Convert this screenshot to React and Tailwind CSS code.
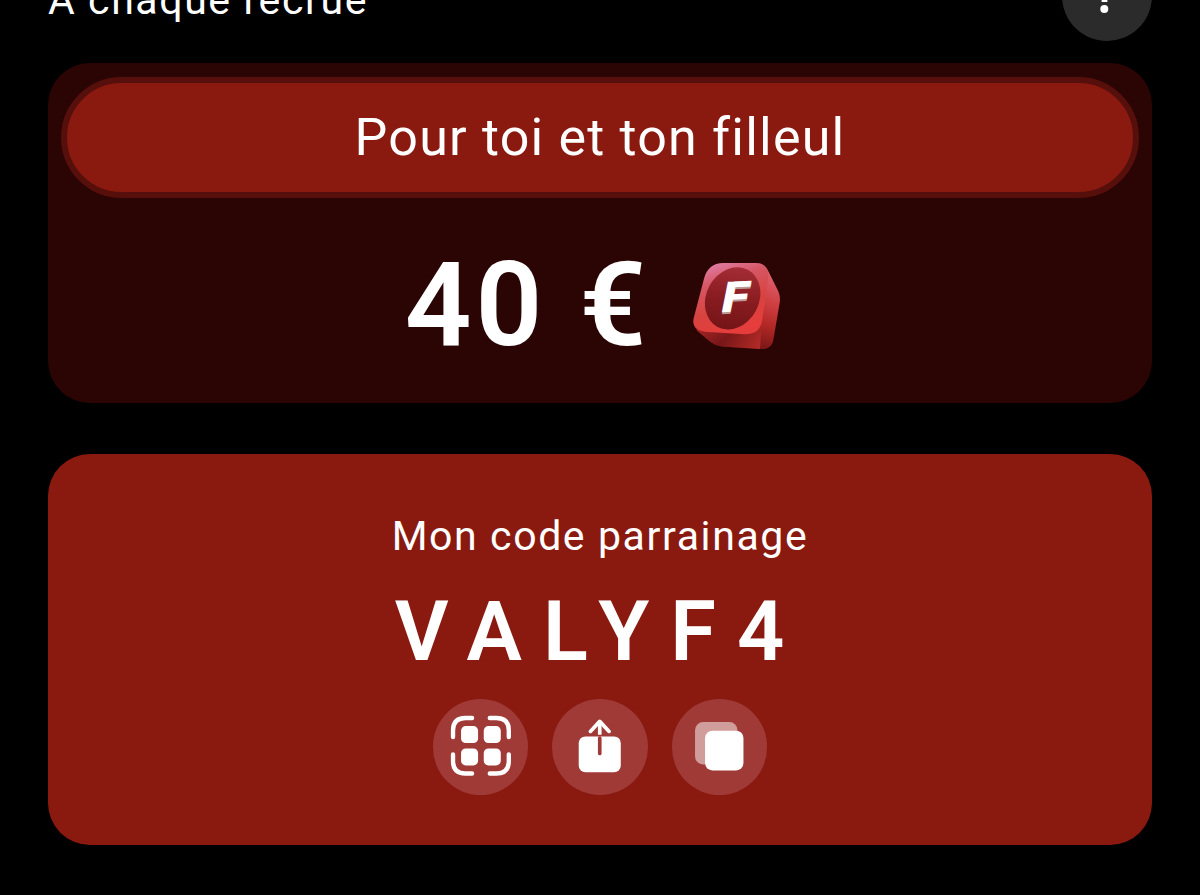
function MoreButton() {
  return (
    <button className="relative h-[90px] w-[90px] shrink-0 rounded-full bg-[#2b2b2b]">
      <svg viewBox="0 0 90 90" className="h-full w-full" fill="#fff">
        <circle cx="42.5" cy="35" r="4" />
        <rect x="39.6" y="42" width="5.8" height="9" />
        <circle cx="42.3" cy="58" r="4" />
      </svg>
    </button>
  );
}

function TokenIcon() {
  return (
    <svg viewBox="0 0 345 330" className="h-[110px] w-[115px]">
      <defs>
        <linearGradient id="side" x1="0.85" y1="0.1" x2="0.55" y2="1">
          <stop offset="0" stopColor="#e0616f" />
          <stop offset="0.35" stopColor="#cf3f42" />
          <stop offset="0.62" stopColor="#b32826" />
          <stop offset="1" stopColor="#6a1213" />
        </linearGradient>
        <linearGradient id="bottom" x1="0" y1="0.3" x2="1" y2="0.7">
          <stop offset="0" stopColor="#b52a2c" />
          <stop offset="0.5" stopColor="#7c1819" />
          <stop offset="1" stopColor="#c02f2b" />
        </linearGradient>
        <linearGradient id="face" x1="0.15" y1="0" x2="0.5" y2="1">
          <stop offset="0" stopColor="#e283b0" />
          <stop offset="0.3" stopColor="#d65664" />
          <stop offset="0.65" stopColor="#d8433f" />
          <stop offset="1" stopColor="#e63d3c" />
        </linearGradient>
        <linearGradient id="disc" x1="0.3" y1="0" x2="0.6" y2="1">
          <stop offset="0" stopColor="#a62e38" />
          <stop offset="0.5" stopColor="#8a1d21" />
          <stop offset="1" stopColor="#741417" />
        </linearGradient>
      </defs>
      <path d="M225 40C246 40 257 48 265 64L293 120C299 132 301 143 299 158L280 270C276 290 264 298 242 297L135 290C112 288 102 284 88 273L50 241Z" fill="url(#side)" />
      <path d="M43 228L90 246L190 252C220 252 238 240 245 222L240 297L135 290C112 288 102 284 88 273L52 243Z" fill="url(#bottom)" opacity="0.75" />
      <path d="M130 39H226C255 39 268 57 265 84L246 214C241 241 224 253 194 253L85 246C53 244 35 231 41 205L72 86C81 55 99 39 130 39Z" fill="url(#face)" />
      <ellipse cx="158" cy="145" rx="79" ry="97" transform="rotate(28 158 145)" fill="url(#disc)" />
      <g fontFamily="Roboto, sans-serif" fontWeight="900" fontSize="128" stroke="none">
        <text transform="matrix(1.16 -0.05 -0.2 1 118 193)" fill="#b99a98">F</text>
        <text transform="matrix(1.16 -0.05 -0.2 1 118 187)" fill="#fff">F</text>
      </g>
    </svg>
  );
}

function QrIcon() {
  return (
    <svg viewBox="24 27 286 286" className="h-full w-full">
      <g fill="#fff">
        <rect x="108" y="108" width="51" height="51" rx="14" />
        <rect x="176" y="108" width="51" height="51" rx="14" />
        <rect x="108" y="175" width="51" height="51" rx="14" />
        <rect x="176" y="175" width="51" height="51" rx="14" />
      </g>
      <path
        d="M84 141V121Q84 84 121 84H141M194 84H214Q251 84 251 121V141M251 193V213Q251 250 214 250H194M141 250H121Q84 250 84 213V193"
        fill="none"
        stroke="#fff"
        strokeWidth="13"
        strokeLinecap="round"
      />
    </svg>
  );
}

function ShareIcon() {
  return (
    <svg viewBox="22 27 286 286" className="h-full w-full" fill="none" strokeLinecap="round" strokeLinejoin="round">
      <rect x="102" y="139" width="126" height="107" rx="20" fill="#fff" />
      <path d="M165 144V190" stroke="#a03a37" strokeWidth="11" />
      <path d="M165 134V96" stroke="#fff" strokeWidth="11" strokeLinecap="butt" />
      <path d="M137 124L165 94L193 124" stroke="#fff" strokeWidth="11" />
    </svg>
  );
}

function CopyIcon() {
  return (
    <svg viewBox="30 27 286 286" className="h-full w-full">
      <rect x="99" y="96" width="127" height="127" rx="24" fill="#fff" fillOpacity="0.5" />
      <rect x="129" y="122" width="115" height="119" rx="22" fill="#fff" />
    </svg>
  );
}

const actions = [
  { label: 'QR code', icon: QrIcon },
  { label: 'Partager', icon: ShareIcon },
  { label: 'Copier', icon: CopyIcon },
];

export default function App() {
  return (
    <div className="h-[895px] w-full overflow-hidden bg-black px-12 font-['Roboto',sans-serif] text-white">
      <header className="-mt-[49px] flex h-[90px] items-start justify-between">
        <h1 className="mt-[25px] whitespace-nowrap text-[41px] leading-[48px] font-normal tracking-[1.6px]">À chaque recrue</h1>
        <MoreButton />
      </header>

      {/* Reward */}
      <section className="mt-[22px] h-[340px] rounded-[42px] bg-[#2b0504] px-[13px] pt-[14px]">
        <div className="flex h-[121px] items-center justify-center rounded-full border-[6px] border-[#560f0b] bg-[#8a1a10]">
          <span className="whitespace-nowrap text-[52px] leading-[60px] tracking-[1.2px]">Pour toi et ton filleul</span>
        </div>
        <div className="mt-[52px] flex h-[110px] items-center justify-center">
          <span className="mr-[30px] whitespace-nowrap text-[117px] leading-[110px] font-semibold tracking-[4px]">40 €</span>
          <TokenIcon />
        </div>
      </section>

      {/* Referral code */}
      <section className="mt-[51px] flex h-[391px] flex-col items-center rounded-[42px] bg-[#8a1a10] pt-[58px]">
        <p className="whitespace-nowrap text-[41px] leading-[48px] tracking-[1.6px]">Mon code parrainage</p>
        <p className="mt-[27px] whitespace-nowrap text-[83px] leading-[90px] font-semibold tracking-[21px]">VALYF4</p>
        <div className="mt-[22px] flex gap-6">
          {actions.map(({ label, icon: Icon }) => (
            <button key={label} aria-label={label} className="h-[95.5px] w-[95.5px] rounded-full bg-[#a03a37]">
              <Icon />
            </button>
          ))}
        </div>
      </section>
    </div>
  );
}
